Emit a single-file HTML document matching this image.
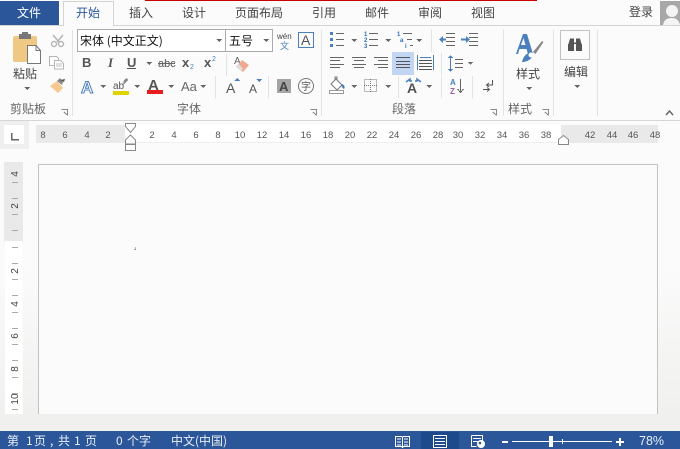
<!DOCTYPE html>
<html><head><meta charset="utf-8"><style>
html,body{margin:0;padding:0;width:680px;height:449px;overflow:hidden;background:#fbfbfb}
svg{display:block}
text{font-family:"Liberation Sans","Noto Sans CJK SC",sans-serif;fill:#444;font-size:12px}
.c{font-family:"Noto Sans CJK SC","Liberation Sans",sans-serif}
.r{font-size:9.5px;fill:#555;text-anchor:middle}
.v{font-size:10px;fill:#444;text-anchor:middle}
.l{stroke:#666;stroke-width:1;fill:none}
.g{fill:#666}
.b{fill:#4a80bd}
.s{fill:#e8eef7}
</style></head><body>
<svg width="680" height="449" viewBox="0 0 680 449" xmlns="http://www.w3.org/2000/svg" shape-rendering="crispEdges">
<defs>
<linearGradient id="fade" gradientUnits="userSpaceOnUse" x1="0" y1="265" x2="0" y2="414"><stop offset="0" stop-color="#fbfbfb"/><stop offset="1" stop-color="#f0f0ee"/></linearGradient>
</defs>
<rect width="680" height="449" fill="#fbfbfb"/>
<!-- title / tabs -->
<rect x="145" y="0" width="392" height="1" fill="#c80000"/>
<rect x="0" y="1" width="59" height="25" fill="#2b579a"/>
<rect x="0" y="25" width="680" height="1" fill="#d4d4d4"/>
<rect x="63" y="1" width="51" height="25" fill="#fbfbfb"/>
<path d="M63.5 26V1.500H113.500V26" fill="none" stroke="#d4d4d4"/>
<text x="17" y="17" class="c" style="fill:#fff">文件</text>
<text x="76" y="17" class="c" style="fill:#2b579a">开始</text>
<text x="129" y="17" class="c">插入</text>
<text x="182" y="17" class="c">设计</text>
<text x="235" y="17" class="c">页面布局</text>
<text x="312" y="17" class="c">引用</text>
<text x="365" y="17" class="c">邮件</text>
<text x="418" y="17" class="c">审阅</text>
<text x="471" y="17" class="c">视图</text>
<text x="629" y="16" class="c">登录</text>
<rect x="660" y="1" width="20" height="24" fill="#a8a8a8"/>
<circle cx="672" cy="11" r="6" fill="#f4f4f4" shape-rendering="auto"/>
<path d="M663 25c1-6 5-7 9-7s7 2 8 7z" fill="#f4f4f4" shape-rendering="auto"/>

<!-- ribbon separators -->
<rect x="0" y="120" width="680" height="1" fill="#d6d6d6"/>
<g fill="#e3e3e3">
<rect x="72" y="30" width="1" height="86"/>
<rect x="321" y="30" width="1" height="86"/>
<rect x="503" y="30" width="1" height="86"/>
<rect x="553" y="30" width="1" height="86"/>
<rect x="597" y="30" width="1" height="86"/>
<rect x="431" y="30" width="1" height="22"/>
<rect x="441" y="53" width="1" height="22"/>
<rect x="398" y="76" width="1" height="22"/>
<rect x="441" y="76" width="1" height="22"/>
<rect x="472" y="76" width="1" height="22"/>
<rect x="226" y="54" width="1" height="22"/>
<rect x="215" y="76" width="1" height="22"/>
<rect x="268" y="76" width="1" height="22"/>
</g>

<!-- clipboard -->
<g shape-rendering="auto">
<rect x="13" y="36" width="24" height="26" rx="2" fill="#efc884"/>
<rect x="19" y="34" width="12" height="5" fill="#777"/>
<rect x="22" y="32" width="6" height="4" fill="#777"/>
<path d="M27.500 45.500H36l4.500 5V63.500H27.500z" fill="#fff" stroke="#777"/>
<path d="M36 45.500V50.500H40.500" fill="none" stroke="#777"/>
<path d="M53 35l6 7M63 35l-6 7" stroke="#b5b5b5" stroke-width="1.500" fill="none"/>
<circle cx="54" cy="44" r="2.500" fill="none" stroke="#b5b5b5" stroke-width="1.400"/>
<circle cx="61" cy="44" r="2.500" fill="none" stroke="#b5b5b5" stroke-width="1.400"/>
<path d="M49.500 56.500h7l2 2v7h-9z" fill="#fff" stroke="#b5b5b5"/>
<path d="M54.500 60.500h6l3 3v5.500h-9z" fill="#fff" stroke="#b5b5b5"/>
<path d="M56 64h6M56 66h6" stroke="#c0c0c0"/>
<path d="M50 86l7-5 6 7-5 5z" fill="#f4c88e"/>
<path d="M57 81l3-3 3 4-1 3z" fill="#888"/>
<path d="M60 80l5-1-1 3z" fill="#555"/>
</g>
<text x="13" y="78" class="c">粘贴</text>
<path d="M24 87h6l-3 3z" class="g"/>
<text x="10" y="113" class="c" style="fill:#666">剪贴板</text>
<path d="M61.500 109.500h6v6M64 112l3 3" fill="none" stroke="#888"/>

<!-- font -->
<rect x="77.500" y="29.500" width="148" height="22" fill="#fff" stroke="#aaa"/>
<rect x="225.500" y="29.500" width="47" height="22" fill="#fff" stroke="#aaa"/>
<text x="80" y="45" class="c" style="fill:#111">宋体 (中文正文)</text>
<text x="229" y="45" class="c" style="fill:#111">五号</text>
<path d="M216 39h6l-3 3zM263 39h6l-3 3z" class="g"/>
<text x="277" y="39" style="font-size:8px">wén</text>
<text x="280" y="49" class="c" style="font-size:9px;fill:#4a80bd">文</text>
<rect x="298.500" y="32.500" width="15" height="15" fill="none" stroke="#4a80bd"/>
<text x="301" y="45" style="font-size:14px;fill:#555">A</text>

<text x="82" y="67" style="font-weight:bold;fill:#555;font-size:13px">B</text>
<text x="108" y="67" style="font-family:'Liberation Serif',serif;font-style:italic;font-weight:bold;fill:#555;font-size:13px">I</text>
<text x="127" y="67" style="font-weight:bold;fill:#555;font-size:13px">U</text>
<rect x="127" y="68" width="9" height="1" fill="#555"/>
<path d="M146 62h6l-3 3z" class="g"/>
<text x="158" y="67" style="font-size:11px;fill:#555">abc</text>
<rect x="158" y="63" width="17" height="1" fill="#666"/>
<text x="182" y="67" style="font-weight:bold;fill:#555;font-size:13px">x</text>
<text x="190" y="69" style="font-size:7px;fill:#4a80bd">2</text>
<text x="204" y="67" style="font-weight:bold;fill:#555;font-size:13px">x</text>
<text x="212" y="61" style="font-size:7px;fill:#4a80bd">2</text>
<g shape-rendering="auto">
<text x="234" y="64" style="font-size:10px;fill:#666">A</text>
<path d="M236 67l6-7 7 5-6 7z" fill="#eea98e"/>
<path d="M236 67l3-3 4 5-2 2z" fill="#ddd"/>
</g>

<text x="81" y="93" style="font-size:17px;font-weight:bold;fill:#fff;stroke:#4a80bd;stroke-width:1">A</text>
<path d="M100 85h6l-3 3z" class="g"/>
<text x="113" y="89" style="font-size:10px;fill:#555">ab</text>
<path d="M124 80l3-2 1 2-5 5z" fill="#888"/>
<rect x="113" y="91" width="16" height="4" fill="#e0d400"/>
<path d="M134 85h6l-3 3z" class="g"/>
<text x="148" y="90" style="font-size:15px;fill:#555;font-weight:bold">A</text>
<rect x="147" y="90" width="16" height="4" fill="#e81c1c"/>
<path d="M168 85h6l-3 3z" class="g"/>
<text x="181" y="91" style="font-size:13px;fill:#666">Aa</text>
<path d="M200 85h6l-3 3z" class="g"/>
<text x="226" y="93" style="font-size:14px;fill:#555">A</text>
<path d="M234 81h6l-3-3z" class="b"/>
<text x="249" y="93" style="font-size:12px;fill:#555">A</text>
<path d="M256 79h6l-3 3z" class="b"/>
<rect x="277" y="79" width="14" height="14" fill="#a5a5a5"/>
<text x="279" y="91" style="font-size:13px;font-weight:bold">A</text>
<circle cx="306" cy="86" r="7.500" fill="none" stroke="#777" shape-rendering="auto"/>
<text x="301" y="90" class="c" style="font-size:10px;fill:#555">字</text>
<text x="177" y="113" class="c" style="fill:#666">字体</text>
<path d="M310.500 109.500h6v6M313 112l3 3" fill="none" stroke="#888"/>

<!-- paragraph row 1 -->
<rect x="330" y="32" width="3" height="3" class="b"/><rect x="330" y="38" width="3" height="3" class="b"/><rect x="330" y="44" width="3" height="3" class="b"/>
<path d="M336 33.500h8M336 39.500h8M336 45.500h8" class="l"/>
<path d="M351 39h6l-3 3z" class="g"/>
<text x="364" y="36" style="font-size:6px;fill:#2b6fb5;font-weight:bold">1</text><text x="364" y="42" style="font-size:6px;fill:#2b6fb5;font-weight:bold">2</text><text x="364" y="48" style="font-size:6px;fill:#2b6fb5;font-weight:bold">3</text>
<path d="M369 33.500h9M369 39.500h9M369 45.500h9" class="l"/>
<path d="M385 39h6l-3 3z" class="g"/>
<text x="397" y="36" style="font-size:6px;fill:#2b6fb5;font-weight:bold">1</text><text x="400" y="42" style="font-size:6px;fill:#2b6fb5;font-weight:bold">a</text><text x="405" y="48" style="font-size:6px;fill:#2b6fb5;font-weight:bold">i</text>
<path d="M403 33.500h9M407 39.500h5M410 45.500h3" class="l"/>
<path d="M416 39h6l-3 3z" class="g"/>
<path d="M446 33.500h9M446 37.500h9M446 41.500h9M446 45.500h9" class="l"/>
<path d="M439 39.500l4-3.500v2.500h3v2h-3v2.500z" class="b" shape-rendering="auto"/>
<path d="M469 33.500h9M469 37.500h9M469 41.500h9M469 45.500h9" class="l"/>
<path d="M470 39.500l-4-3.500v2.500h-5v2h5v2.500z" class="b" shape-rendering="auto"/>
<!-- row 2 -->
<path d="M330 57.500h14M330 60.500h10M330 64.500h14M330 67.500h10" class="l"/>
<path d="M352 57.500h14M354 60.500h10M352 64.500h14M354 67.500h10" class="l"/>
<path d="M374 57.500h14M378 60.500h10M374 64.500h14M378 67.500h10" class="l"/>
<rect x="392" y="52" width="22" height="23" fill="#c2d5f2"/>
<path d="M396 57.500h14M396 61.500h14M396 64.500h14M396 67.500h14" stroke="#555" fill="none"/>
<path d="M417.500 55v15M433.500 55v15" stroke="#4a80bd" fill="none"/>
<path d="M419 60.500h13M419 63.500h13M419 66.500h13M419 69.500h13" stroke="#555" fill="none"/>
<path d="M420 57.500h11" stroke="#4a80bd" fill="none"/>
<path d="M450.500 57v13" stroke="#4a80bd"/>
<path d="M448 58l2.500-3 2.500 3zM448 69l2.500 3 2.500-3z" class="b"/>
<path d="M455 59.500h8M455 63.500h8M455 67.500h8" class="l"/>
<path d="M468 62h5l-2.500 3z" class="g"/>
<!-- row 3 -->
<g shape-rendering="auto">
<path d="M331 84l5-5 6 6-5 5z" fill="#fff" stroke="#777"/>
<path d="M342 84c3 1 3 4 2 5-2-1-3-3-2-5z" class="b"/>
<path d="M335 80v-3h2v3" fill="none" stroke="#777"/>
</g>
<rect x="329.500" y="90.500" width="14" height="3" fill="#fff" stroke="#999"/>
<path d="M351 85h6l-3 3z" class="g"/>
<rect x="364.500" y="79.500" width="12" height="12" fill="none" stroke="#777" stroke-dasharray="1 1"/>
<path d="M370.500 79v13M364 85.500h13" stroke="#777" stroke-dasharray="1 1" fill="none"/>
<path d="M385 85h6l-3 3z" class="g"/>
<text x="407" y="93" style="font-size:14px;font-weight:bold;fill:#555">A</text>
<path d="M406 82l4-3v2h2M421 82l-4-3v2h-2" stroke="#4a80bd" fill="none" stroke-width="1.500" shape-rendering="auto"/>
<path d="M426 85h6l-3 3z" class="g"/>
<text x="450" y="85" style="font-size:8px;font-weight:bold;fill:#4a80bd">A</text>
<text x="450" y="94" style="font-size:8px;font-weight:bold;fill:#a060b0">Z</text>
<path d="M460.500 79v13M457.500 89l3 3.500 3-3.500" stroke="#666" fill="none"/>
<g shape-rendering="auto" fill="none" stroke="#555">
<path d="M492.500 80v5h-6M489 83l-2.500 2 2.500 2"/>
<path d="M483 89.500h6M487 87.500l2.500 2-2.500 2"/>
</g>
<text x="392" y="113" class="c" style="fill:#666">段落</text>
<path d="M490.500 109.500h6v6M493 112l3 3" fill="none" stroke="#888"/>

<!-- styles -->
<g shape-rendering="auto">
<path fill-rule="evenodd" d="M516 54L523 34H527L533 54H528L526.500 49H519.500L518 54zM521 45H525.500L523.500 38z" fill="#4a80bd"/>
<path d="M533 52l9-11 1.500 1-8 12z" fill="#888"/>
<path d="M522 62c1-4 3-8 7-9l4 1c0 4-5 8-11 8z" fill="#4a80bd"/>
<circle cx="531" cy="55" r="2.500" fill="#fff"/>
</g>
<text x="516" y="78" class="c">样式</text>
<path d="M526 87h6l-3 3z" class="g"/>
<text x="508" y="113" class="c" style="fill:#666">样式</text>
<path d="M542.500 109.500h6v6M545 112l3 3" fill="none" stroke="#888"/>

<!-- edit -->
<rect x="560.500" y="30.500" width="29" height="29" fill="none" stroke="#c2c2c2"/>
<g shape-rendering="auto" fill="#555">
<path d="M570 38.500h4v4h2v-4h4l1.500 5.500h-13z"/>
<rect x="568" y="44" width="6" height="7"/>
<rect x="576" y="44" width="6" height="7"/>
</g>
<text x="564" y="76" class="c">编辑</text>
<path d="M574 85h6l-3 3z" class="g"/>
<path d="M666 115l3.500-4 3.500 4" fill="none" stroke="#666" stroke-width="1.500" shape-rendering="auto"/>

<!-- ruler area -->
<rect x="0" y="121" width="29" height="28" fill="#efefef"/>
<rect x="4" y="125" width="20" height="19" fill="#fff"/>
<path d="M11.500 133v6.500h7.500" fill="none" stroke="#666" stroke-width="1.500"/>
<rect x="36" y="125" width="622" height="18" fill="#e9e9e9"/>
<rect x="125" y="125" width="436" height="17" fill="#fff"/>
<rect x="125" y="142" width="436" height="1" fill="#efefef"/>
<text class="r" x="43" y="138">8</text><text class="r" x="65" y="138">6</text><text class="r" x="87" y="138">4</text><text class="r" x="108" y="138">2</text>
<text class="r" x="152" y="138">2</text><text class="r" x="174" y="138">4</text><text class="r" x="196" y="138">6</text><text class="r" x="218" y="138">8</text>
<text class="r" x="240" y="138">10</text><text class="r" x="262" y="138">12</text><text class="r" x="284" y="138">14</text><text class="r" x="306" y="138">16</text>
<text class="r" x="328" y="138">18</text><text class="r" x="350" y="138">20</text><text class="r" x="372" y="138">22</text><text class="r" x="394" y="138">24</text>
<text class="r" x="416" y="138">26</text><text class="r" x="438" y="138">28</text><text class="r" x="458" y="138">30</text><text class="r" x="480" y="138">32</text>
<text class="r" x="502" y="138">34</text><text class="r" x="524" y="138">36</text><text class="r" x="546" y="138">38</text>
<text class="r" x="590" y="138">42</text><text class="r" x="612" y="138">44</text><text class="r" x="633" y="138">46</text><text class="r" x="655" y="138">48</text>
<g shape-rendering="auto">
<path d="M125.500 123.500h10v3l-5 6-5-6z" fill="#fff" stroke="#888"/>
<path d="M130.500 135l5 5v4h-10v-4z" fill="#fff" stroke="#888"/>
<rect x="125.500" y="144.500" width="10" height="6" fill="#fff" stroke="#888"/>
<path d="M558.500 144.500v-5l5-4 5 4v5z" fill="#fff" stroke="#888"/>
</g>

<!-- doc -->
<rect x="0" y="265" width="5" height="149" fill="url(#fade)"/>
<rect x="23" y="265" width="15" height="149" fill="url(#fade)"/>
<rect x="658" y="265" width="22" height="149" fill="url(#fade)"/>
<rect x="4" y="162" width="19" height="80" fill="#e9e9e9"/>
<rect x="5" y="241" width="17" height="173" fill="#fff"/>
<rect x="39" y="165" width="618" height="249" fill="#fbfbfb"/>
<path d="M38.500 414V164.500H657.500V414" fill="none" stroke="#c2c2c2"/>
<g transform="translate(18 174) rotate(-90)"><text class="v" y="0">4</text></g>
<g transform="translate(18 206) rotate(-90)"><text class="v" y="0">2</text></g>
<g transform="translate(18 271) rotate(-90)"><text class="v" y="0">2</text></g>
<g transform="translate(18 304) rotate(-90)"><text class="v" y="0">4</text></g>
<g transform="translate(18 336) rotate(-90)"><text class="v" y="0">6</text></g>
<g transform="translate(18 369) rotate(-90)"><text class="v" y="0">8</text></g>
<g transform="translate(18 399) rotate(-90)"><text class="v" y="0">10</text></g>
<path d="M12 182.500h6M12 198.500h6M12 214.500h6M12 230.500h6M12 247.500h6M12 263.500h6M12 279.500h6M12 295.500h6M12 312.500h6M12 328.500h6M12 344.500h6M12 360.500h6M12 377.500h6M12 393.500h6M12 409.500h6" stroke="#aaa" fill="none"/>
<rect x="134" y="249" width="2" height="1" fill="#999"/>
<rect x="135" y="247" width="1" height="2" fill="#bbb"/>

<!-- status -->
<rect x="0" y="414" width="680" height="17" fill="#f0f0ee"/>
<rect x="0" y="431" width="680" height="18" fill="#2b579a"/>
<text x="7" y="445" class="c s">第</text><text x="26" y="445" class="c s">1</text><text x="34" y="445" class="c s">页</text>
<text x="50" y="445" class="c s">,</text>
<text x="58" y="445" class="c s">共</text><text x="74" y="445" class="c s">1</text><text x="85" y="445" class="c s">页</text>
<text x="116" y="445" class="c s">0</text><text x="127" y="445" class="c s">个字</text>
<text x="171" y="445" class="c s">中文(中国)</text>
<rect x="421" y="432" width="38" height="17" fill="#1d4a8b"/>
<path d="M395.500 436.500h6l1 1 1-1h6v10h-6l-1 1-1-1h-6z" fill="none" stroke="#fff"/>
<path d="M402.500 437v10M397 439h4M397 442h4M397 445h4M404 439h4M404 442h4M404 445h4" stroke="#fff" fill="none"/>
<rect x="433.500" y="435.500" width="13" height="12" fill="none" stroke="#fff"/>
<path d="M435 438.500h10M435 441.500h10M435 444.500h10" stroke="#fff" fill="none"/>
<path d="M471.500 435.500h11v5M471.500 435.500v11h5M473 438.500h8M473 441.500h5" stroke="#fff" fill="none"/>
<circle cx="481" cy="444" r="4" fill="#fff" shape-rendering="auto"/>
<circle cx="480" cy="443" r="1.300" fill="#2b579a" shape-rendering="auto"/>
<rect x="502" y="441" width="6" height="2" fill="#fff"/>
<rect x="512" y="441" width="100" height="1" fill="#fff"/>
<rect x="549" y="436" width="4" height="11" fill="#fff"/>
<rect x="562" y="439" width="1" height="5" fill="#fff"/>
<rect x="616" y="441" width="8" height="2" fill="#fff"/>
<rect x="619" y="438" width="2" height="8" fill="#fff"/>
<text x="639" y="445" class="s" style="font-size:12.500px">78%</text>
</svg>
</body></html>
